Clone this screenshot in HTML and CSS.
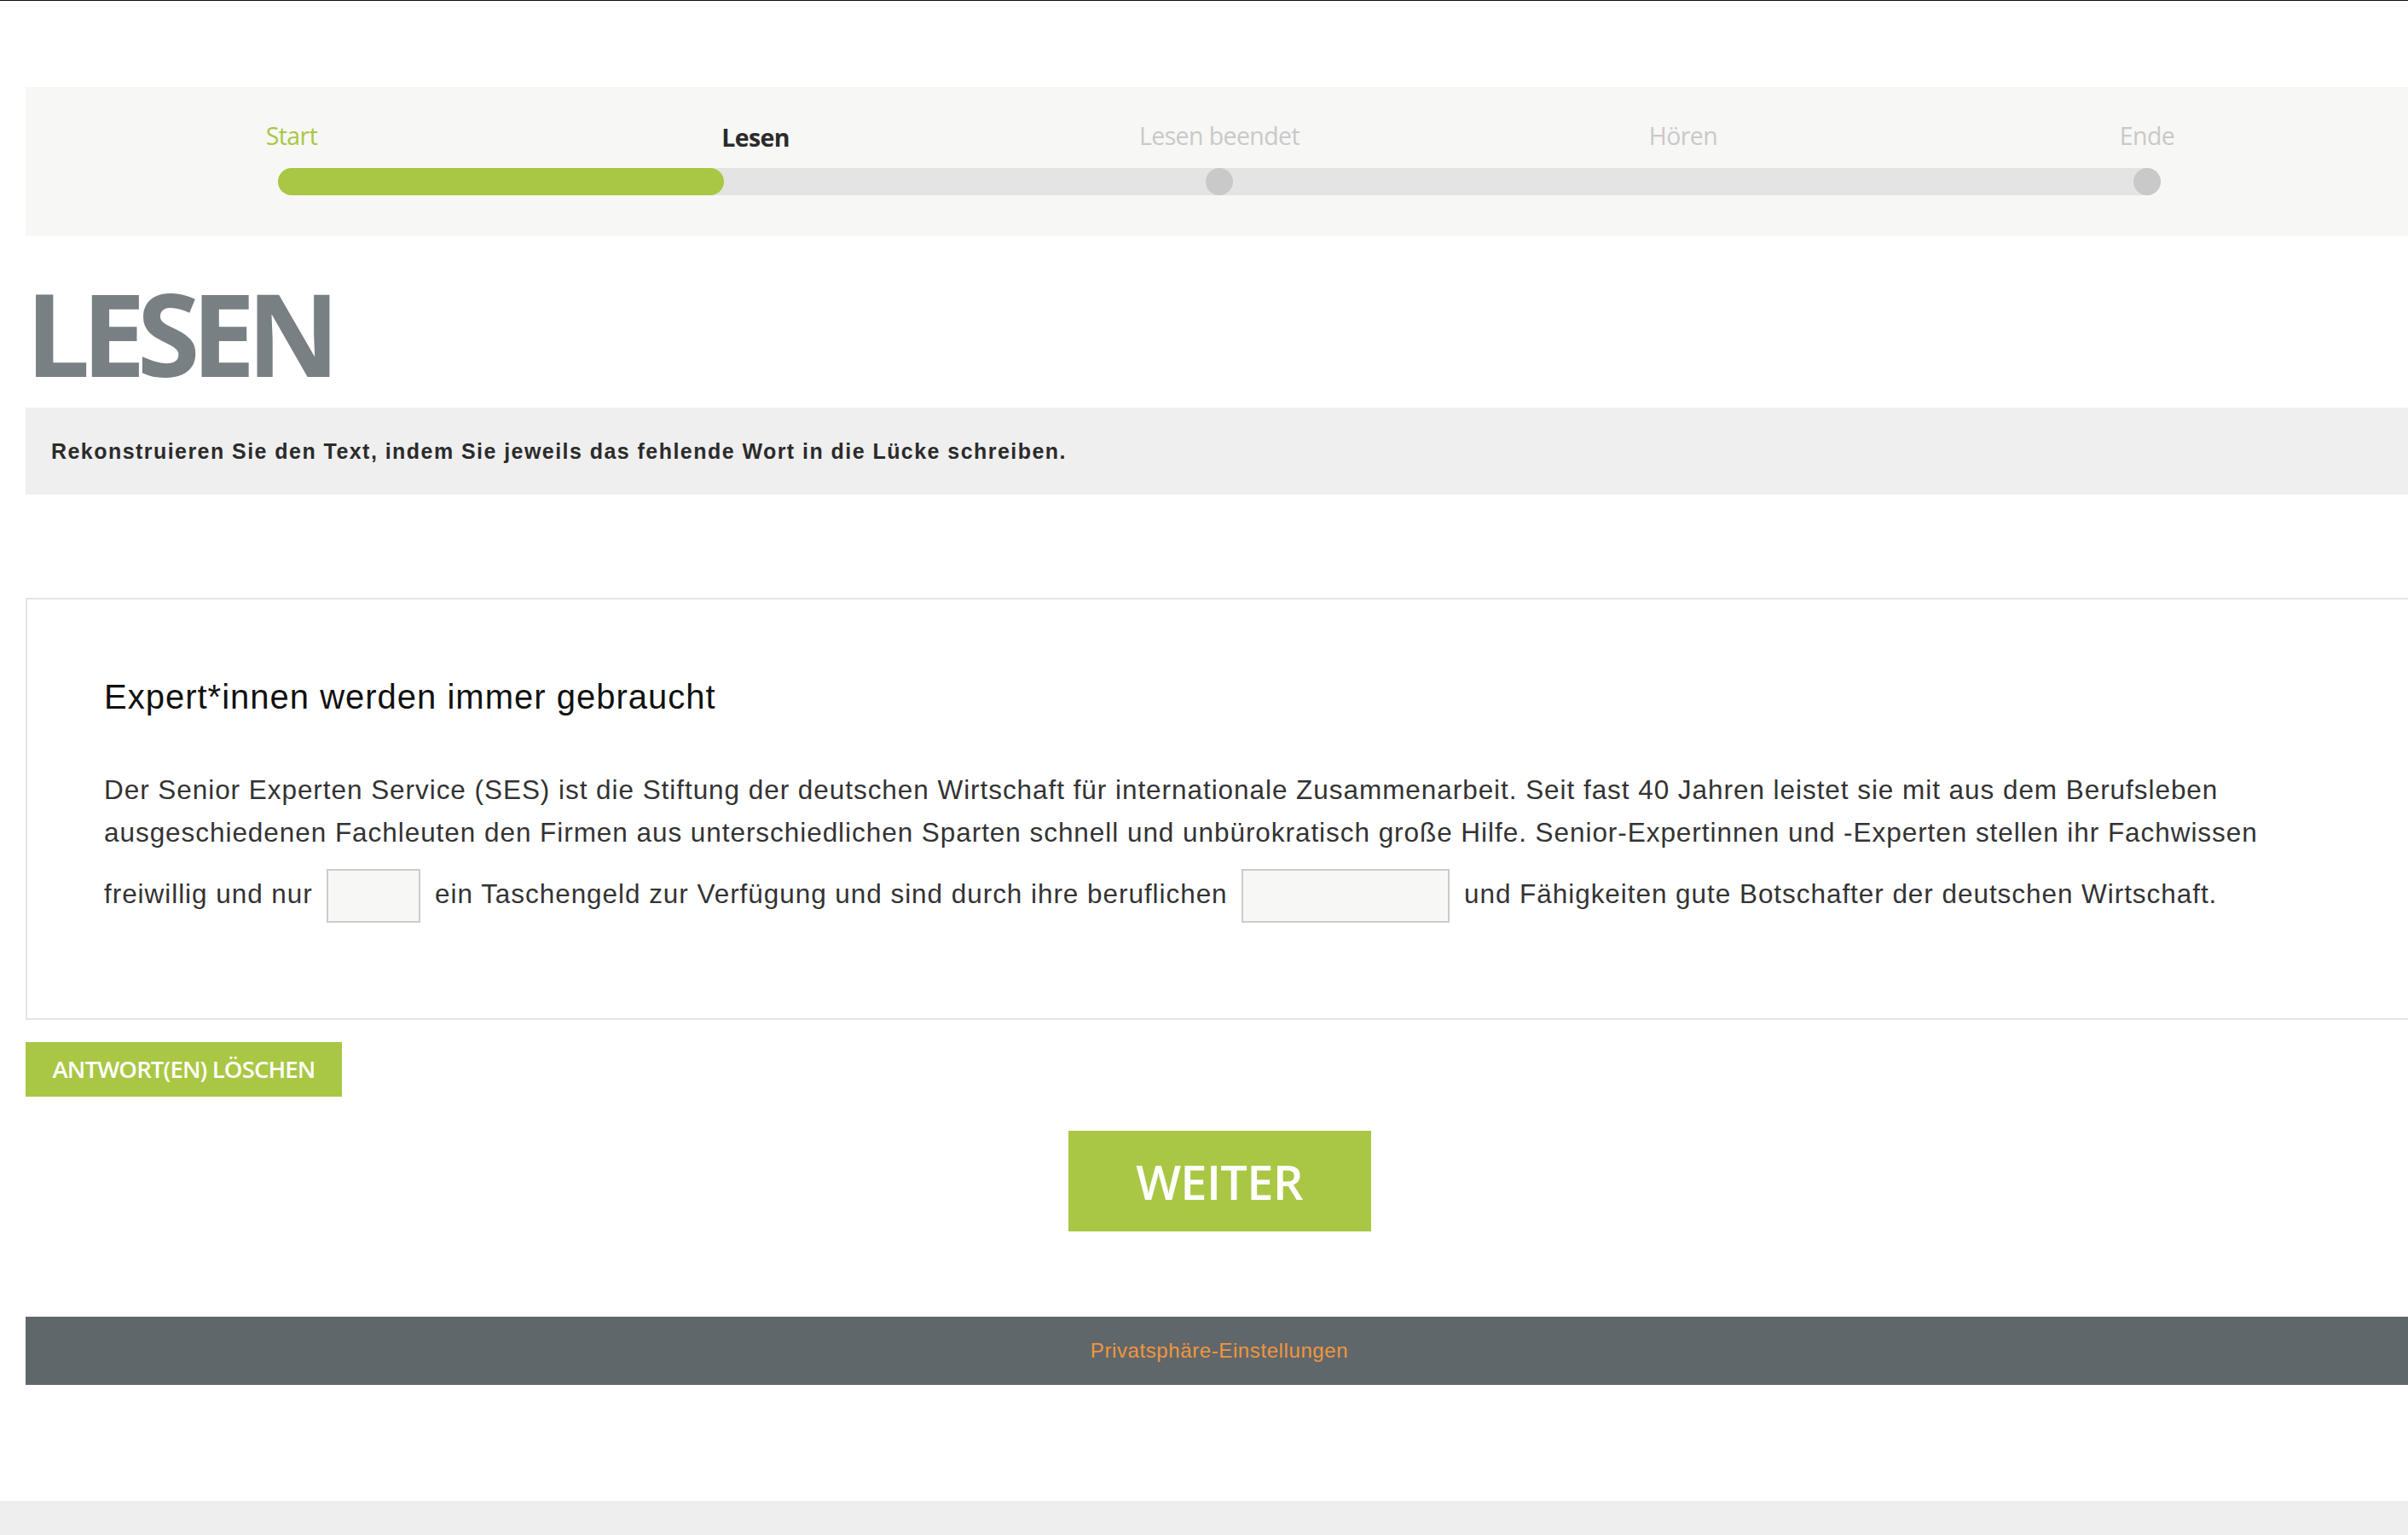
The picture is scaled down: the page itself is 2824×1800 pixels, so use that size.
FILE: index.html
```html
<!DOCTYPE html>
<html lang="de">
<head>
<meta charset="utf-8">
<title>Lesen</title>
<link rel="stylesheet" href="styles.css">
</head>
<body>
<div class="page">
  <div class="container">
    <section class="progress">
      <div class="steps">
        <div class="step step-done">Start</div>
        <div class="step step-current">Lesen</div>
        <div class="step">Lesen beendet</div>
        <div class="step">Hören</div>
        <div class="step">Ende</div>
      </div>
      <div class="track-wrap">
        <div class="track">
          <div class="fill" style="width:523px"></div>
          <span class="dot dot-mid"></span>
          <span class="dot dot-end"></span>
        </div>
      </div>
    </section>

    <h1 class="title">LESEN</h1>

    <div class="instruction">Rekonstruieren Sie den Text, indem Sie jeweils das fehlende Wort in die Lücke schreiben.</div>

    <section class="card">
      <h2 class="card-title">Expert*innen werden immer gebraucht</h2>
      <p class="card-text">Der Senior Experten Service (SES) ist die Stiftung der deutschen Wirtschaft für internationale Zusammenarbeit. Seit fast 40 Jahren leistet sie mit aus dem Berufsleben ausgeschiedenen Fachleuten den Firmen aus unterschiedlichen Sparten schnell und unbürokratisch große Hilfe. Senior-Expertinnen und -Experten stellen ihr Fachwissen freiwillig und nur <input class="gap gap-short" type="text"> ein Taschengeld zur Verfügung und sind durch ihre beruflichen <input class="gap gap-long" type="text"> und Fähigkeiten gute Botschafter der deutschen Wirtschaft.</p>
    </section>

    <button class="btn-clear" type="button">ANTWORT(EN) LÖSCHEN</button>

    <div class="next-row">
      <button class="btn-next" type="button">WEITER</button>
    </div>

    <footer class="footer">
      <a class="footer-link" href="#">Privatsphäre-Einstellungen</a>
    </footer>
  </div>
</div>
</body>
</html>
```

FILE: styles.css
```css
html {
  background: #eeeeee;
  overflow: hidden;
}

body {
  margin: 0;
  font-family: "Liberation Sans", Arial, sans-serif;
  color: #333333;
}

.page {
  background: #ffffff;
  border-top: 1px solid #111111;
  min-height: 1759px;
  overflow: hidden;
}

.container {
  width: 2800px;
  margin-left: 30px;
  padding-top: 101px;
}

/* progress */
.progress {
  background: #f7f7f5;
  padding: 37px 40px 48px;
}

.steps {
  display: grid;
  grid-template-columns: repeat(5, 544px);
}

.step {
  font-family: "Open Sans", sans-serif;
  font-stretch: 94%;
  font-size: 28.5px;
  letter-spacing: -0.6px;
  line-height: 40px;
  font-weight: 500;
  text-align: center;
  color: #c9c9c9;
}

.step-done {
  color: #a9c744;
}

.step-current {
  color: #2b2b2b;
  font-weight: 700;
  position: relative;
  top: 2px;
}

.track-wrap {
  padding: 18px 256px 0;
}

.track {
  position: relative;
  height: 32px;
  border-radius: 16px;
  background: #e4e4e4;
}

.fill {
  height: 32px;
  border-radius: 16px;
  background: #a9c744;
}

.dot {
  position: absolute;
  top: 0;
  width: 32px;
  height: 32px;
  border-radius: 50%;
  background: #c9c9c9;
}

.dot-mid {
  left: 1088px;
}

.dot-end {
  right: 0;
}

/* title */
.title {
  margin: 45px 0 19px;
  font-family: "Open Sans", sans-serif;
  font-stretch: 90%;
  font-weight: 700;
  font-size: 134px;
  line-height: 137px;
  letter-spacing: -10px;
  color: #798084;
}

.instruction {
  background: #efefef;
  height: 102px;
  display: flex;
  align-items: center;
  padding-left: 30px;
  font-weight: 700;
  font-size: 25px;
  letter-spacing: 1.45px;
  color: #2b2b2b;
}

/* card */
.card {
  margin-top: 121px;
  border: 2px solid #e5e5e5;
  padding: 90px 90px 95px;
}

.card-title {
  margin: 0 0 60px;
  font-weight: 400;
  font-size: 40px;
  line-height: 48px;
  letter-spacing: 1px;
  color: #111111;
}

.card-text {
  margin: 0;
  font-size: 31.5px;
  line-height: 1.6;
  letter-spacing: 0.95px;
  color: #333333;
}

.gap {
  box-sizing: border-box;
  height: 63px;
  margin: 17px 7px;
  border: 2px solid #cccccc;
  background: #f7f7f5;
  vertical-align: middle;
  padding: 0 10px;
  font-family: inherit;
  font-size: 28px;
}

.gap-short {
  width: 110px;
}

.gap-long {
  width: 244px;
}

/* buttons */
.btn-clear {
  display: block;
  margin-top: 26px;
  width: 371px;
  height: 64px;
  border: 0;
  padding: 0;
  background: #a9c744;
  color: #ffffff;
  font-family: "Open Sans", sans-serif;
  font-stretch: 96%;
  font-weight: 600;
  font-size: 27.5px;
  letter-spacing: -0.85px;
}

.next-row {
  display: flex;
  justify-content: center;
  margin-top: 40px;
}

.btn-next {
  width: 355px;
  height: 118px;
  border: 0;
  padding: 0;
  background: #a9c744;
  color: #ffffff;
  font-family: "Open Sans", sans-serif;
  font-stretch: 96%;
  font-weight: 600;
  font-size: 56px;
  letter-spacing: -0.7px;
}

.footer {
  margin-top: 100px;
  height: 80px;
  background: #60676b;
  display: flex;
  align-items: center;
  justify-content: center;
}

.footer-link {
  color: #f0963c;
  text-decoration: none;
  font-size: 24px;
  letter-spacing: 0.6px;
}
```
